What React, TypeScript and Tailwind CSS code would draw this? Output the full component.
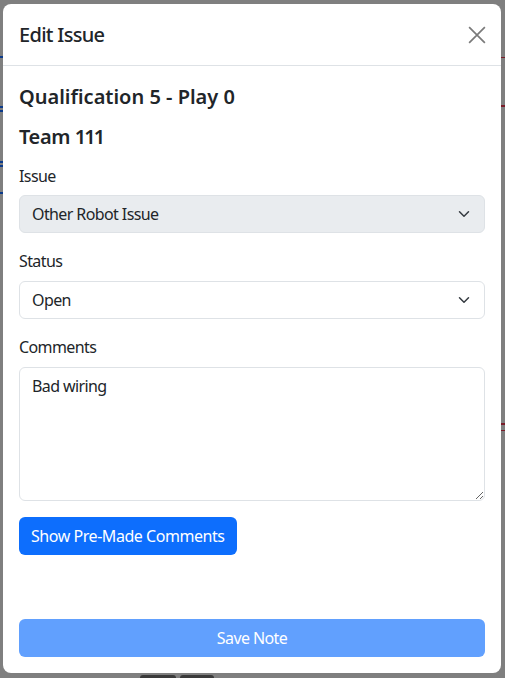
import React from "react";

function Chevron() {
  return (
    <svg width="16" height="12" viewBox="0 0 16 16" fill="none">
      <path
        d="m2 5 6 6 6-6"
        stroke="#343a40"
        strokeWidth="2"
        strokeLinecap="round"
        strokeLinejoin="round"
      />
    </svg>
  );
}

export default function App() {
  return (
    <div
      className="relative h-[678px] w-[505px] overflow-hidden bg-[#7f7f7f] pt-[4px] pl-[3px] pr-[4px]"
      style={{ fontFamily: '"Noto Sans", "Open Sans", sans-serif' }}
    >
      {/* page behind the backdrop, only edges visible */}
      <div className="absolute left-0 top-[56px] h-[2px] w-[3px] bg-[#0b3a8a]" />
      <div className="absolute left-0 top-[106px] h-[2px] w-[3px] bg-[#0b3a8a]" />
      <div className="absolute left-0 top-[110px] h-[2px] w-[3px] bg-[#0b3a8a]" />
      <div className="absolute left-0 top-[161px] h-[2px] w-[3px] bg-[#0b3a8a]" />
      <div className="absolute left-0 top-[165px] h-[2px] w-[3px] bg-[#0b3a8a]" />
      <div className="absolute left-0 top-[192px] h-[2px] w-[3px] bg-[#0b3a8a]" />
      <div className="absolute right-0 top-[57px] h-[1px] w-[4px] bg-[#7a1c28]" />
      <div className="absolute right-0 top-[105px] h-[2px] w-[4px] bg-[#7a1c28]" />
      <div className="absolute right-0 top-[423px] h-[2px] w-[4px] bg-[#7a1c28]" />
      <div className="absolute right-0 top-[430px] h-[1px] w-[4px] bg-[#7a1c28]" />
      <div className="absolute bottom-0 left-[140px] h-[3px] w-[36px] rounded-t bg-[#3a3a3a]" />
      <div className="absolute bottom-0 left-[180px] h-[3px] w-[34px] rounded-t bg-[#3a3a3a]" />

      {/* modal */}
      <div className="relative flex h-[669px] flex-col rounded-lg bg-white text-[#212529]">
        {/* HEADER */}
        <div className="flex h-[62px] items-center justify-between border-b border-[#dee2e6] px-4">
          <h1 className="text-[20px] font-medium leading-[30px] tracking-[-0.7px]">
            Edit Issue
          </h1>
          <button className="mr-[-4px] flex h-6 w-6 items-center justify-center">
            <svg width="18" height="18" viewBox="0 0 16 16" fill="none">
              <path d="M1 1 15 15M15 1 1 15" stroke="#7a7a7a" strokeWidth="1.5" />
            </svg>
          </button>
        </div>

        {/* BODY */}
        <div className="flex flex-1 flex-col px-4 pt-[16px] tracking-[-0.6px]">
          <h2 className="mb-[10px] text-[20px] font-semibold leading-[30px] tracking-normal">
            Qualification 5 - Play 0
          </h2>
          <h2 className="mb-[12px] text-[20px] font-semibold leading-[30px] tracking-[-0.4px]">
            Team <span className="tracking-[-2px]">111</span>
          </h2>

          <label className="mb-[7px] text-base leading-6">Issue</label>
          <div className="flex h-[38px] items-center justify-between rounded-md border border-[#dee2e6] bg-[#e9ecef] pl-3 pr-3 text-base">
            <span>Other Robot Issue</span>
            <Chevron />
          </div>

          <label className="mb-2 mt-[16px] text-base leading-6">Status</label>
          <div className="flex h-[38px] items-center justify-between rounded-md border border-[#dee2e6] bg-white pl-3 pr-3 text-base">
            <span>Open</span>
            <Chevron />
          </div>

          <label className="mb-2 mt-[16px] text-base leading-6">Comments</label>
          <textarea
            className="h-[134px] resize-y rounded-md border border-[#dee2e6] px-3 py-[6px] text-base leading-6 tracking-[-0.6px] outline-none"
            defaultValue="Bad wiring"
          />

          <div className="mt-4">
            <button className="h-[38px] rounded-md bg-[#0d6efd] px-3 text-base tracking-[-0.45px] text-white">
              Show Pre-Made Comments
            </button>
          </div>

          <div className="mt-auto pb-4">
            <button className="h-[38px] w-full rounded-md bg-[#61a0fe] text-base text-white">
              Save Note
            </button>
          </div>
        </div>
      </div>
    </div>
  );
}
